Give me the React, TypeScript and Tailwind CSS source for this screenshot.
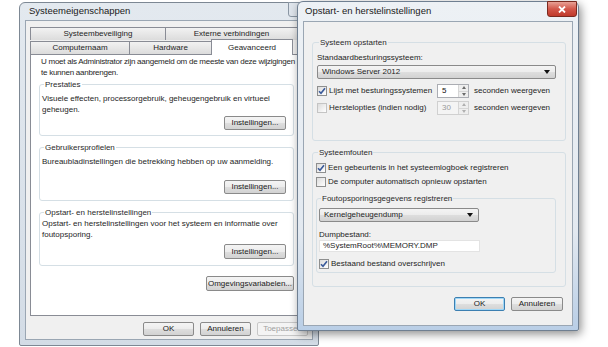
import React from 'react';

const uiFont = { fontFamily: '"Liberation Sans", Arial, sans-serif' };

const Btn = ({ label, className = '', disabled = false, primary = false }: { label: string; className?: string; disabled?: boolean; primary?: boolean }) => (
  <div
    className={`h-[14px] flex items-center justify-center rounded-[2px] border text-[8px] leading-none ${
      primary ? 'border-[#3c7fb1] shadow-[inset_0_0_0_1px_#9fd7f7]' : disabled ? 'border-[#c8c8c8]' : 'border-[#8a8a8a]'
    } ${disabled ? 'text-[#a0a0a0] bg-[#f4f4f4]' : 'text-[#1a1a1a] bg-[linear-gradient(to_bottom,#f4f4f4_0%,#ececec_50%,#dedede_51%,#d2d2d2_100%)]'} ${className}`}
  >
    {label}
  </div>
);

const Check = ({ checked = false, disabled = false }: { checked?: boolean; disabled?: boolean }) => (
  <div
    className={`w-[10px] h-[10px] shrink-0 border ${disabled ? 'border-[#c4c4c4]' : 'border-[#8e8f8f]'} bg-[linear-gradient(135deg,#dcdcdc,#ffffff)] flex items-center justify-center`}
  >
    {checked && (
      <svg width="8" height="8" viewBox="0 0 8 8">
        <path d="M1 4.2 L3 6.3 L7 1.2" fill="none" stroke="#3a5a9a" strokeWidth="1.6" />
      </svg>
    )}
  </div>
);

const CheckRow = ({ label, checked = false, disabled = false, className = '' }: { label: string; checked?: boolean; disabled?: boolean; className?: string }) => (
  <div className={`flex items-center gap-[2px] h-[14px] ${className}`}>
    <Check checked={checked} disabled={disabled} />
    <span className="text-[8px] text-[#1e1e1e]">{label}</span>
  </div>
);

const Combo = ({ value, className = '' }: { value: string; className?: string }) => (
  <div
    className={`h-[14px] flex items-center justify-between rounded-[2px] border border-[#8a8a8a] bg-[linear-gradient(to_bottom,#f4f4f4_0%,#ececec_50%,#dedede_51%,#d2d2d2_100%)] pl-[4px] pr-[5px] ${className}`}
  >
    <span className="text-[8px] text-[#1e1e1e]">{value}</span>
    <svg width="6" height="4" viewBox="0 0 6 4">
      <path d="M0 0 H6 L3 4 Z" fill="#111" />
    </svg>
  </div>
);

const Spin = ({ value, disabled = false }: { value: string; disabled?: boolean }) => (
  <div className={`w-[32px] h-[14px] flex border ${disabled ? 'border-[#d0d0d0] bg-[#f4f4f4]' : 'border-[#abadb3] bg-white'}`}>
    <span className={`flex-1 pl-[4px] text-[8px] leading-[12px] ${disabled ? 'text-[#9a9a9a]' : 'text-[#111]'}`}>{value}</span>
    <div className="w-[10px] flex flex-col border-l border-[#d6d6d6] bg-[#eeeeee]">
      <div className="flex-1 flex items-center justify-center border-b border-[#d6d6d6]">
        <svg width="4" height="3" viewBox="0 0 4 3"><path d="M0 3 H4 L2 0 Z" fill={disabled ? '#b0b0b0' : '#6a6a6a'} /></svg>
      </div>
      <div className="flex-1 flex items-center justify-center">
        <svg width="4" height="3" viewBox="0 0 4 3"><path d="M0 0 H4 L2 3 Z" fill={disabled ? '#b0b0b0' : '#6a6a6a'} /></svg>
      </div>
    </div>
  </div>
);

const Group = ({ title, children, className = '' }: { title: string; children: React.ReactNode; className?: string }) => (
  <fieldset className={`border border-[#d5dfe5] rounded-[3px] px-[2px] ${className}`}>
    <legend className="px-[1px] ml-[2px] text-[8px] leading-[11px] text-[#2a2a2a]">{title}</legend>
    {children}
  </fieldset>
);

const Tab = ({ label, className = '' }: { label: string; className?: string }) => (
  <div
    className={`h-[13px] flex items-center justify-center border border-b-0 border-[#898c95] bg-[linear-gradient(to_bottom,#f2f2f2,#dcdcdc)] text-[8px] text-[#1e1e1e] ${className}`}
  >
    {label}
  </div>
);

const SystemProperties = () => (
  <div className="absolute left-[19px] top-[2px] w-[300px] h-[344px] rounded-t-[6px] rounded-b-[2px] border border-[#7d8894] bg-[linear-gradient(to_bottom,#e3e9ef,#d3dce6)] px-[5px] pb-[5px] flex flex-col">
    <div className="h-[17px] pl-[4px] flex items-center text-[9.5px] text-[#1a1a1a]">Systeemeigenschappen</div>
    <div className="flex-1 border border-[#9aa6b3] bg-[#f0f0f0] flex flex-col pl-[4px] pr-[4px]">
      <div className="mt-[6px] flex">
        <Tab label="Systeembeveiliging" className="w-[136px]" />
        <Tab label="Externe verbindingen" className="w-[132px] border-l-0" />
      </div>
      <div className="flex items-end h-[14px] relative z-10">
        <Tab label="Computernaam" className="w-[100px]" />
        <Tab label="Hardware" className="w-[82px] border-l-0" />
        <div className="w-[82px] h-[16px] -mb-[1px] -ml-[1px] flex items-start justify-center pt-[2px] border border-b-0 border-[#898c95] bg-white text-[8px] text-[#1e1e1e]">
          Geavanceerd
        </div>
      </div>
      <div className="h-[262px] border border-[#898c95] bg-white flex flex-col pl-[8px] w-[282px]">
        <div className="mt-[1px] pl-[2px] text-[8px] leading-[11px] text-[#1e1e1e] whitespace-nowrap tracking-[-0.25px]">
          U moet als Administrator zijn aangemeld om de meeste van deze wijzigingen
          <br />
          te kunnen aanbrengen.
        </div>
        <Group title="Prestaties" className="w-[255px] mt-[1px] pb-[5px]">
          <div className="mt-[3px] text-[8px] leading-[11px] text-[#1e1e1e] whitespace-nowrap">
            Visuele effecten, processorgebruik, geheugengebruik en virtueel
            <br />
            geheugen.
          </div>
          <div className="flex justify-end pr-[5px] mt-[1px]">
            <Btn label="Instellingen..." className="w-[62px]" />
          </div>
        </Group>
        <Group title="Gebruikersprofielen" className="w-[255px] mt-[6px] pb-[6px]">
          <div className="mt-[3px] text-[8px] leading-[11px] text-[#1e1e1e]">
            Bureaubladinstellingen die betrekking hebben op uw aanmelding.
          </div>
          <div className="flex justify-end pr-[5px] mt-[13px]">
            <Btn label="Instellingen..." className="w-[62px]" />
          </div>
        </Group>
        <Group title="Opstart- en herstelinstellingen" className="w-[255px] mt-[6px] pb-[6px]">
          <div className="text-[8px] leading-[11px] text-[#1e1e1e] whitespace-nowrap">
            Opstart- en herstelinstellingen voor het systeem en informatie over
            <br />
            foutopsporing.
          </div>
          <div className="flex justify-end pr-[5px] mt-[4px]">
            <Btn label="Instellingen..." className="w-[62px] h-[15px]" />
          </div>
        </Group>
        <div className="w-[255px] flex justify-end mt-[10px]">
          <Btn label="Omgevingsvariabelen..." className="w-[88px] h-[15px]" />
        </div>
      </div>
      <div className="mt-[6px] flex gap-[6px] pl-[113px]">
        <Btn label="OK" className="w-[51px]" />
        <Btn label="Annuleren" className="w-[51px]" />
        <Btn label="Toepassen" className="w-[51px]" disabled />
      </div>
    </div>
    <div className="absolute right-[4px] top-[-1px] w-[26px] h-[15px] rounded-b-[3px] border border-[#8a96a3] bg-[#dfe5ec]" />
  </div>
);

const StartupRecovery = () => (
  <div className="absolute left-[297px] top-[1px] w-[282px] h-[330px] rounded-t-[6px] rounded-b-[2px] border border-[#6f7f91] bg-[linear-gradient(to_bottom,#edf1f5_0%,#e3e9f0_70%,#b9cee6_100%)] shadow-[2px_3px_10px_rgba(0,0,0,0.45)] px-[5px] pb-[4px] flex flex-col">
    <div className="h-[19px] pl-[2px] flex items-center text-[9.5px] text-[#1a1a1a]">Opstart- en herstelinstellingen</div>
    <div className="absolute right-[1px] top-[-1px] w-[30px] h-[16px] rounded-b-[3px] border border-[#7a2a20] bg-[linear-gradient(to_bottom,#e8a195_0%,#d2574a_50%,#c0392b_100%)] flex items-center justify-center">
      <svg width="8" height="7" viewBox="0 0 8 7">
        <path d="M1 0.5 L7 6.5 M7 0.5 L1 6.5" stroke="#ffffff" strokeWidth="1.8" />
      </svg>
    </div>
    <div className="flex-1 border border-[#9aa6b3] bg-[#f0f0f0] flex flex-col pl-[8px] pr-[6px]">
      <Group title="Systeem opstarten" className="mt-[15px] h-[104px] pl-[4px] pr-[9px]">
        <div className="text-[8px] leading-[11px] text-[#1e1e1e] mt-[4px]">Standaardbesturingssysteem:</div>
        <Combo value="Windows Server 2012" className="mt-[2px]" />
        <div className="mt-[5px] flex items-center h-[14px]">
          <CheckRow label="Lijst met besturingssystemen" checked className="w-[120px]" />
          <Spin value="5" />
          <span className="ml-[5px] text-[8px] text-[#1e1e1e]">seconden weergeven</span>
        </div>
        <div className="mt-[3px] flex items-center h-[14px]">
          <CheckRow label="Herstelopties (indien nodig)" disabled className="w-[120px]" />
          <Spin value="30" disabled />
          <span className="ml-[5px] text-[8px] text-[#1e1e1e]">seconden weergeven</span>
        </div>
      </Group>
      <Group title="Systeemfouten" className="mt-[6px] h-[140px] pl-[3px] pr-[9px]">
        <CheckRow label="Een gebeurtenis in het systeemlogboek registreren" checked className="mt-[3px]" />
        <CheckRow label="De computer automatisch opnieuw opstarten" className="mt-[0px]" />
        <Group title="Foutopsporingsgegevens registreren" className="mt-[4px] h-[80px] pl-[2px] pr-[6px]">
          <Combo value="Kernelgeheugendump" className="mt-[4px] w-[160px]" />
          <div className="mt-[7px] text-[8px] leading-[11px] text-[#1e1e1e]">Dumpbestand:</div>
          <div className="w-[161px] h-[12px] border border-[#e3e3e3] bg-white pl-[3px] text-[8px] leading-[10px] text-[#1e1e1e]">%SystemRoot%\MEMORY.DMP</div>
          <CheckRow label="Bestaand bestand overschrijven" checked className="mt-[5px]" />
        </Group>
      </Group>
      <div className="mt-[10px] flex justify-end gap-[6px] pr-[3px]">
        <Btn label="OK" className="w-[51px]" primary />
        <Btn label="Annuleren" className="w-[52px]" />
      </div>
    </div>
  </div>
);

export default function App() {
  return (
    <div className="relative w-[608px] h-[347px] bg-white overflow-hidden" style={uiFont}>
      <SystemProperties />
      <StartupRecovery />
    </div>
  );
}
